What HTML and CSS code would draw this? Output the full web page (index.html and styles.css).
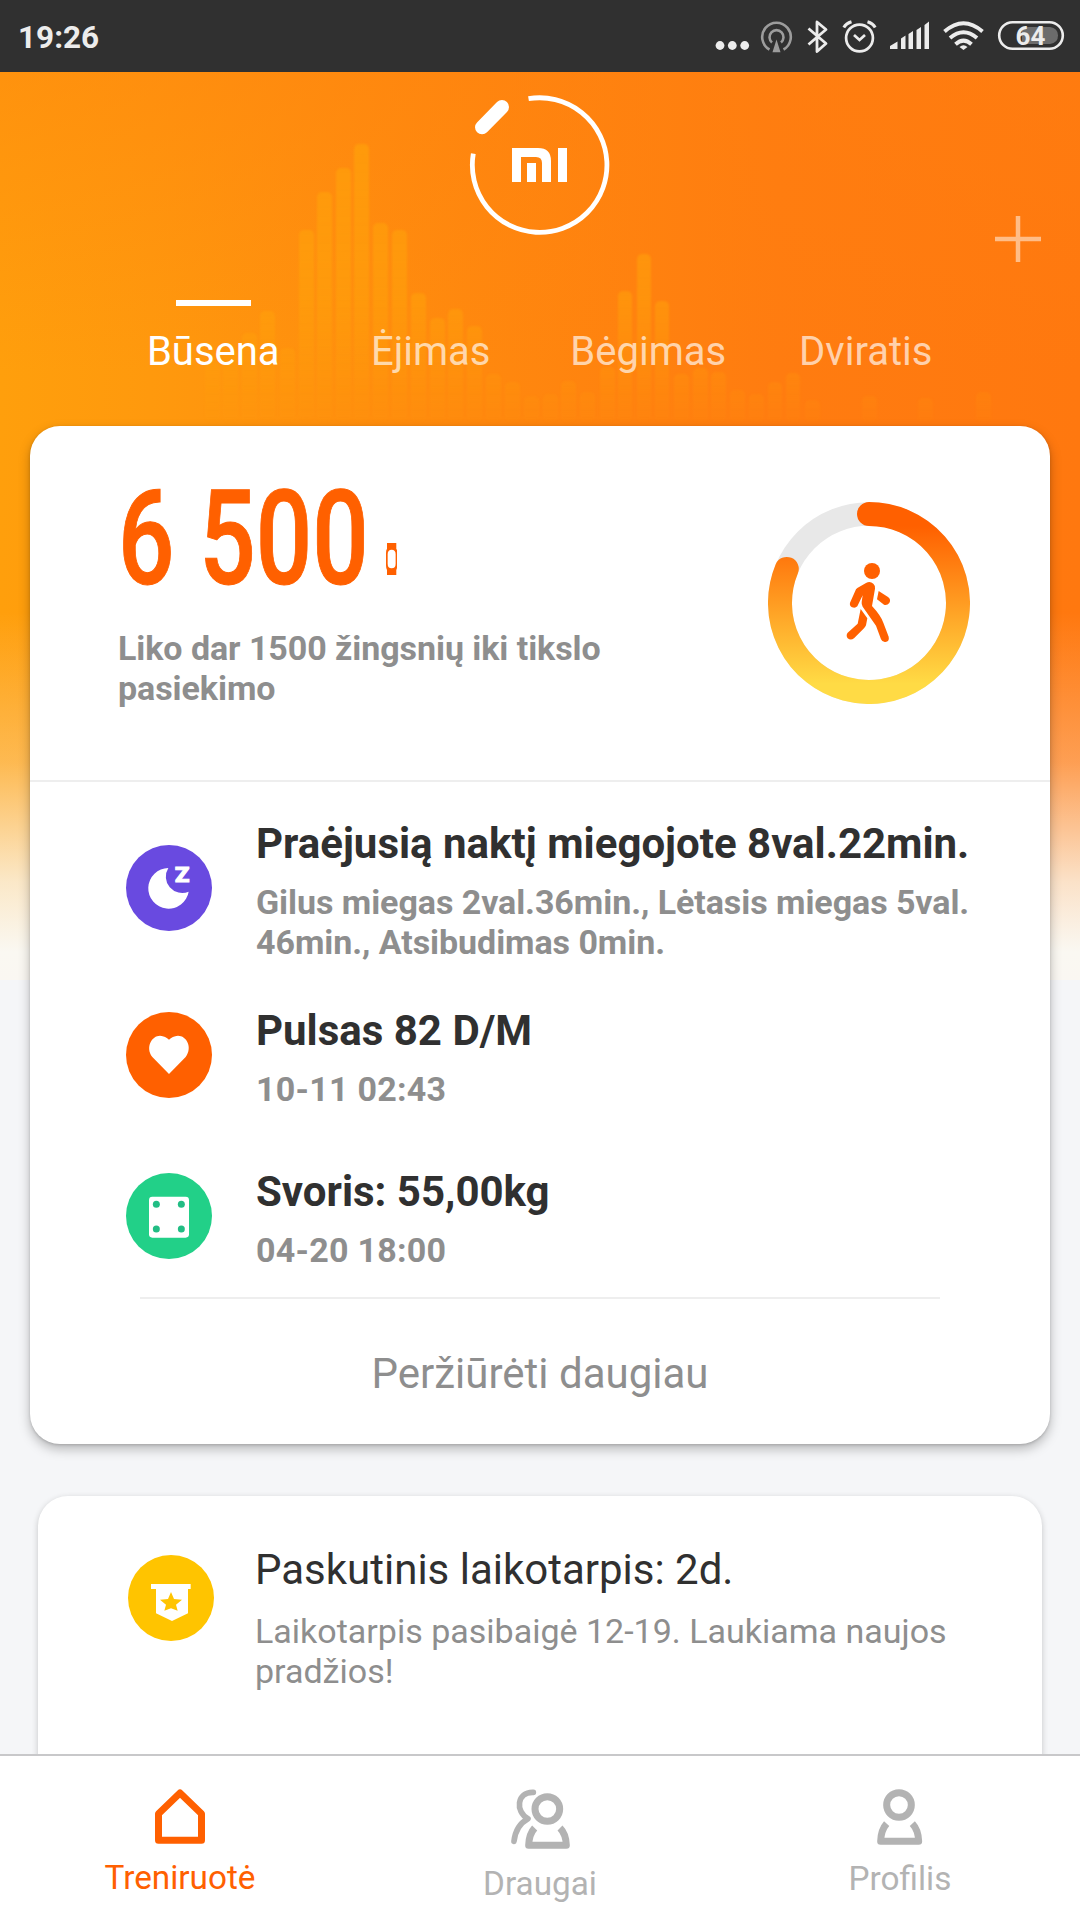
FILE: index.html
```html
<!DOCTYPE html>
<html lang="lt">
<head>
<meta charset="utf-8">
<title>Būsena</title>
<link rel="stylesheet" href="styles.css">
</head>
<body>
<div class="app">
  <header class="status-bar">
    <span class="clock">19:26</span>
    <div class="status-icons">
      <svg width="44" height="40" viewBox="712 16 44 40" fill="#ececec"><circle cx="720" cy="45.5" r="4.4"/><circle cx="732.3" cy="45.5" r="4.4"/><circle cx="744.7" cy="45.5" r="4.4"/></svg>
      <svg width="44" height="40" viewBox="756 16 44 40" fill="none" stroke="#9c9c9c" stroke-width="2.6"><path d="M769.5 49.5A14.3 14.3 0 1 1 783.5 49.5"/><path d="M772 42.5A7 7 0 1 1 781 42.5"/><path d="M776.5 42L779.5 51.500H773.500Z" fill="#9c9c9c" stroke-width="1.500"/></svg>
      <svg width="36" height="40" viewBox="800 16 36 40" fill="none" stroke="#ececec" stroke-width="2.800" stroke-linejoin="round"><path d="M808.500 28.500L826 43.500L817 51.500V22L826 29.500L808.500 44.500"/></svg>
      <svg width="48" height="40" viewBox="836 16 48 40" fill="none" stroke="#ececec" stroke-width="2.700"><circle cx="859.500" cy="38" r="13.400"/><path d="M854 35L859.500 40L865 35"/><path d="M843.800 27.500Q846 23.500 851.500 21.800M875.200 27.500Q873 23.500 867.500 21.800" stroke-width="3"/></svg>
      <svg width="52" height="40" viewBox="884 16 52 40" fill="#ececec"><path d="M890 49V46L897.500 41.500V49ZM901 49V38.500L905.500 35.500V49ZM908.500 49V34L913 31V49ZM916.500 49V30L921 27V49ZM924.500 49V25L929 21.500V49Z"/></svg>
      <svg width="54" height="40" viewBox="936 16 54 40" fill="none" stroke="#ececec" stroke-width="3.900"><path d="M944.500 31.500Q963.500 15 982.500 31.500M950 38Q963.500 26.500 977 38M955.500 44.300Q963.500 37 971.500 44.300"/><path d="M963.500 50L959.500 47Q963.500 43.500 967.500 47Z" fill="#ececec" stroke="none"/></svg>
      <svg width="80" height="40" viewBox="990 16 80 40"><rect x="999.200" y="22.200" width="63.600" height="26.600" rx="13.300" fill="none" stroke="#ececec" stroke-width="2.600"/><path d="M1022 27H1050Q1058 28 1058 35.500Q1058 43 1050 44H1022Z" fill="#6c6c6c"/><text class="battery-level" x="1030.500" y="44.800" text-anchor="middle">64</text></svg>
    </div>
  </header>

  <main class="content">
    <svg class="backdrop-bars" width="1080" height="354" viewBox="0 72 1080 354">
      <defs><linearGradient id="bar" gradientUnits="userSpaceOnUse" x1="0" y1="140" x2="0" y2="426"><stop offset="0" stop-color="#ffa70a" stop-opacity=".55"/><stop offset=".55" stop-color="#ffa70a" stop-opacity=".48"/><stop offset="1" stop-color="#ffa70a" stop-opacity=".04"/></linearGradient></defs>
      <g fill="url(#bar)">
        <rect x="205" y="362" width="15" height="60" rx="5"/><rect x="223" y="350" width="15" height="72" rx="5"/><rect x="242" y="333" width="15" height="90" rx="5"/><rect x="260" y="311" width="15" height="110" rx="5"/><rect x="280" y="348" width="15" height="74" rx="5"/>
        <rect x="299" y="230" width="15" height="190" rx="5"/><rect x="317" y="192" width="15" height="230" rx="5"/><rect x="336" y="168" width="15" height="254" rx="5"/><rect x="354" y="144" width="15" height="278" rx="5"/><rect x="373" y="223" width="15" height="199" rx="5"/><rect x="392" y="230" width="15" height="192" rx="5"/><rect x="411" y="293" width="15" height="129" rx="5"/><rect x="430" y="318" width="15" height="104" rx="5"/><rect x="448" y="309" width="15" height="113" rx="5"/><rect x="467" y="326" width="15" height="96" rx="5"/><rect x="486" y="374" width="15" height="48" rx="5"/><rect x="505" y="382" width="15" height="40" rx="5"/><rect x="524" y="396" width="15" height="26" rx="5"/><rect x="543" y="394" width="15" height="28" rx="5"/><rect x="561" y="381" width="15" height="41" rx="5"/><rect x="580" y="392" width="15" height="30" rx="5"/>
        <rect x="600" y="367" width="15" height="55" rx="5"/><rect x="618" y="291" width="14" height="131" rx="5"/><rect x="637" y="254" width="14" height="168" rx="5"/><rect x="655" y="301" width="14" height="121" rx="5"/><rect x="674" y="374" width="15" height="48" rx="5"/><rect x="693" y="368" width="15" height="54" rx="5"/><rect x="711" y="372" width="15" height="50" rx="5"/><rect x="730" y="390" width="15" height="32" rx="5"/><rect x="749" y="394" width="15" height="28" rx="5"/><rect x="768" y="382" width="14" height="40" rx="5"/><rect x="786" y="373" width="14" height="49" rx="5"/><rect x="805" y="400" width="15" height="22" rx="5"/><rect x="862" y="396" width="15" height="26" rx="5"/><rect x="918" y="398" width="15" height="24" rx="5"/><rect x="976" y="392" width="15" height="30" rx="5"/>
      </g>
    </svg>

    <section class="hero">
      <svg class="logo" width="150" height="150" viewBox="465 90 150 150" fill="none" stroke="#fff">
        <path d="M528.500 98.700A67.300 67.300 0 1 1 473.300 153.700" stroke-width="4.800"/>
        <path d="M482 127.300L502 107" stroke-width="14" stroke-linecap="round"/>
        <path d="M512 182V148H538Q551 148 551 161V182H542V163Q542 157 536 157H521V182ZM527 163H536V182H527ZM558 148H567V182H558Z" fill="#fff" stroke="none"/>
      </svg>
      <svg class="add" width="46" height="46" viewBox="0 0 46 46"><path d="M0 23H46M23 0V46" stroke="#fff" stroke-opacity=".5" stroke-width="4.500"/></svg>
      <nav class="tabs">
        <a class="tab tab-active">Būsena</a>
        <a class="tab">Ėjimas</a>
        <a class="tab">Bėgimas</a>
        <a class="tab">Dviratis</a>
      </nav>
    </section>

    <section class="card today">
      <div class="summary">
        <div class="summary-text">
          <div class="steps">
            <span class="steps-value"><span class="steps-digits">6 500</span></span>
            <svg class="band" width="11.300" height="32" viewBox="828 249 34 96"><path fill="#ff6000" fill-rule="evenodd" d="M831 249H859V266Q862 270 862 280V316Q862 324 859 330V345H831V330Q828 324 828 316V280Q828 270 831 266ZM845 269Q833 269 833 283V311Q833 325 845 325Q857 325 857 311V283Q857 269 845 269Z"/></svg>
          </div>
          <p class="goal">Liko dar 1500 žingsnių iki tikslo pasiekimo</p>
        </div>
        <svg class="ring" width="202" height="202" viewBox="84 66 606 606">
          <defs><linearGradient id="ring" gradientUnits="userSpaceOnUse" x1="0" y1="66" x2="0" y2="672"><stop offset=".12" stop-color="#ff6000"/><stop offset=".9" stop-color="#ffdb45"/></linearGradient></defs>
          <circle cx="387" cy="369" r="267" fill="none" stroke="#e8e8e8" stroke-width="71"/>
          <path d="M387 102A267 267 0 1 1 140.300 266.800" fill="none" stroke="url(#ring)" stroke-width="72" stroke-linecap="round"/>
          <g fill="#ff6000">
            <circle cx="396" cy="273" r="24"/>
            <path d="M352 324L378 309Q390 302 400 311Q406 316 405 326L396 378Q422 406 430 428L446 470Q449 484 436 486Q427 487 423 478L408 437L368 380Q364 374 365 366L368 346L352 379Q346 386 336 382Q328 377 330 368L348 328Z"/>
            <path d="M416 333L444 351Q454 358 448 369Q441 377 432 374L411 358Z"/>
            <path d="M362 387L382 415L378 436Q376 441 372 445L342 475Q332 482 323 475Q317 466 323 458L353 431Z"/>
          </g>
        </svg>
      </div>

      <div class="metrics">
        <article class="metric">
          <svg class="metric-icon" width="86" height="86" viewBox="78 136 258 258"><circle cx="207" cy="265" r="129" fill="#694ae0"/><path d="M205 205A61 61 0 1 0 266 276A49 49 0 0 1 205 205Z" fill="#fff"/><text class="snooze" x="225" y="246" textLength="43" lengthAdjust="spacingAndGlyphs">Z</text></svg>
          <div class="metric-text"><h2>Praėjusią naktį miegojote 8val.22min.</h2><p>Gilus miegas 2val.36min., Lėtasis miegas 5val.<br>46min., Atsibudimas 0min.</p></div>
        </article>
        <article class="metric">
          <svg class="metric-icon" width="86" height="86" viewBox="78 639 258 258"><circle cx="207" cy="768" r="129" fill="#ff6000"/><path d="M207 825L157 774C135 744 156 710 180 710Q197 711 207 722Q217 711 234 710C259 710 279 744 257 774Z" fill="#fff"/></svg>
          <div class="metric-text"><h2>Pulsas 82 D/M</h2><p class="metric-date">10-11 02:43</p></div>
        </article>
        <article class="metric">
          <svg class="metric-icon" width="86" height="86" viewBox="78 1120 258 258"><circle cx="207" cy="1249" r="129" fill="#22d088"/><rect x="147" y="1191" width="120" height="123" rx="10" fill="#fff"/><g fill="#22bd84"><circle cx="169" cy="1214" r="10.500"/><circle cx="244" cy="1214" r="10.500"/><circle cx="169" cy="1288" r="10.500"/><circle cx="244" cy="1288" r="10.500"/></g></svg>
          <div class="metric-text"><h2>Svoris: 55,00kg</h2><p class="metric-date">04-20 18:00</p></div>
        </article>
      </div>
      <a class="more">Peržiūrėti daugiau</a>
    </section>

    <section class="card streak">
      <svg class="metric-icon" width="86" height="86" viewBox="144 45 258 258"><circle cx="273" cy="174" r="129" fill="#ffc400"/><path d="M213 132H332V147H324V220L276 243L228 220V147H213Z" fill="#fff"/><path d="M273 156L282 177L306 179L288 194L293 212L273 205L253 212L258 194L240 179L264 177Z" fill="#ffc400"/></svg>
      <div class="metric-text"><h2>Paskutinis laikotarpis: 2d.</h2><p>Laikotarpis pasibaigė 12-19. Laukiama naujos pradžios!</p></div>
    </section>
  </main>

  <nav class="bottom-nav">
    <a class="nav-item nav-active"><svg width="60" height="56" viewBox="210 747 180 168" fill="none" stroke="currentColor" stroke-width="21" stroke-linejoin="round"><path d="M300 759L364.500 821V901H235.500V821Z"/></svg>Treniruotė</a>
    <a class="nav-item"><svg width="60" height="62" viewBox="90 57 180 186" fill="none" stroke="currentColor" stroke-width="21" stroke-linejoin="round"><circle cx="202" cy="117" r="37"/><path d="M164 174Q147 192 146 226H259Q258 192 240 174"/><path d="M160 67C110 65 105 125 144 146C118 160 105 185 102 214" stroke-width="17" stroke-linecap="round" stroke-linejoin="round"/></svg>Draugai</a>
    <a class="nav-item"><svg width="60" height="57" viewBox="1170 57 180 171" fill="none" stroke="currentColor" stroke-width="21" stroke-linejoin="round"><circle cx="1257" cy="105" r="37"/><path d="M1220 161Q1203 180 1202 214H1316Q1315 180 1297 161"/></svg>Profilis</a>
  </nav>
</div>
</body>
</html>
```
FILE: styles.css
```css
* { box-sizing: border-box; }

body {
  margin: 0;
  font-family: Roboto, "Liberation Sans", sans-serif;
  color: #303030;
}

h2, p { margin: 0; }

.app {
  display: flex;
  flex-direction: column;
  width: 1080px;
  height: 1920px;
  overflow: hidden;
  background: #f5f6f8;
}

.status-bar {
  flex: none;
  display: flex;
  align-items: center;
  justify-content: space-between;
  height: 72px;
  padding: 2px 10px 0 18px;
  background: #303030;
}

.clock {
  color: #ececec;
  font-size: 31.5px;
  font-weight: 700;
}

.status-icons {
  display: flex;
  margin-top: -2px;
}

.battery-level {
  fill: #ececec;
  font-size: 26px;
  font-weight: 700;
}

.content {
  position: relative;
  flex: 1;
  min-height: 0;
  overflow: hidden;
  background:
    linear-gradient(180deg, rgba(250, 250, 248, 0) 540px, rgba(250, 247, 240, .3) 690px, rgba(250, 246, 236, .84) 810px, #faf8f2 880px, #faf7f2 908px, #f5f6f8 908px),
    linear-gradient(180deg, rgba(255, 128, 16, .4) 0, rgba(255, 128, 16, 0) 300px),
    linear-gradient(90deg, #ff9f0c 0%, #ff990d 14%, #ff880e 45%, #ff7c10 72%, #ff780f 100%);
}

.backdrop-bars {
  position: absolute;
  top: 0;
  left: 0;
  filter: blur(1px);
}

.hero {
  position: relative;
  display: flex;
  flex-direction: column;
  align-items: center;
  height: 354px;
  padding-top: 18px;
}

.add {
  position: absolute;
  top: 144px;
  right: 39px;
}

.tabs {
  display: grid;
  grid-template-columns: repeat(4, 217.5px);
  margin: 60px 1px 0 0;
}

.tab {
  display: flex;
  flex-direction: column;
  align-items: center;
  color: rgba(255, 255, 255, .66);
  font-size: 40px;
  line-height: 47px;
}

.tab::before {
  content: "";
  width: 75px;
  height: 6px;
  margin-bottom: 22px;
}

.tab-active { color: #fff; }
.tab-active::before { background: #fff; }

.card {
  position: relative;
  background: #fff;
  border-radius: 30px;
}

.today {
  height: 1018px;
  margin: 0 30px;
  box-shadow: 0 5px 12px rgba(0, 0, 0, .26), 0 1px 3px rgba(0, 0, 0, .16);
}

.summary {
  display: flex;
  justify-content: space-between;
  height: 356px;
  padding: 43px 80px 0 88px;
  border-bottom: 2px solid #eee;
}

.summary-text { width: 520px; }

.steps {
  display: flex;
  align-items: flex-end;
  height: 140px;
}

.steps-value {
  width: 268px;
  height: 140px;
}

.steps-digits {
  display: block;
  width: max-content;
  color: #ff6000;
  font-size: 132px;
  font-weight: 500;
  line-height: 140px;
  -webkit-text-stroke: 1px #ff6000;
  transform: scaleX(.753);
  transform-origin: left;
}

.band { margin-bottom: 34px; }

.goal {
  margin-top: 19px;
  color: #8e8e8e;
  font-size: 34px;
  font-weight: 700;
  letter-spacing: -.06px;
  line-height: 40px;
}

.ring { margin-top: 33px; }

.metrics {
  margin: 0 110px;
  padding: 37px 0 27px;
}

.metric, .streak {
  display: flex;
  gap: 44px;
}

.metric {
  align-items: center;
  margin: 0 -14px;
}

.metric + .metric { margin-top: 44px; }
.metric + .metric + .metric { margin-top: 58px; }

.metric-icon {
  flex: none;
  margin-top: -5px;
}

.metric-text h2 {
  font-size: 42px;
  font-weight: 700;
  line-height: 49px;
  white-space: nowrap;
}

.metric-text p {
  margin-top: 14px;
  color: #8e8e8e;
  font-size: 34px;
  font-weight: 700;
  letter-spacing: -.06px;
  line-height: 40px;
}

.metric .metric-text p { white-space: nowrap; }

.metric-text .metric-date { letter-spacing: .25px; }

.snooze {
  fill: #fff;
  stroke: #fff;
  stroke-width: 3px;
  font-size: 59px;
  font-weight: 900;
}

.more {
  display: block;
  margin: 0 110px;
  padding-top: 50px;
  border-top: 2px solid #eee;
  color: #8e8e8e;
  font-size: 42px;
  line-height: 49px;
  text-align: center;
}

.streak {
  height: 400px;
  margin: 52px 38px 0;
  padding: 49px 60px 0 90px;
  gap: 41px;
  box-shadow: 0 2px 6px rgba(0, 0, 0, .2);
}

.streak .metric-icon { margin-top: 10px; }

.streak h2 { font-weight: 400; }

.metric-text p:last-child { font-size: 34px; }

.streak .metric-text p {
  margin-top: 17px;
  font-weight: 400;
  letter-spacing: 0;
}

.bottom-nav {
  flex: none;
  position: relative;
  display: grid;
  grid-template-columns: repeat(3, 1fr);
  height: 166px;
  padding-top: 33px;
  background: #fff;
  border-top: 2px solid #c8c8ca;
}

.nav-item {
  display: flex;
  flex-direction: column;
  align-items: center;
  gap: 13px;
  color: #b3b3b3;
  font-size: 33.3px;
  line-height: 40px;
}

.nav-active { color: #ff6000; }
```
